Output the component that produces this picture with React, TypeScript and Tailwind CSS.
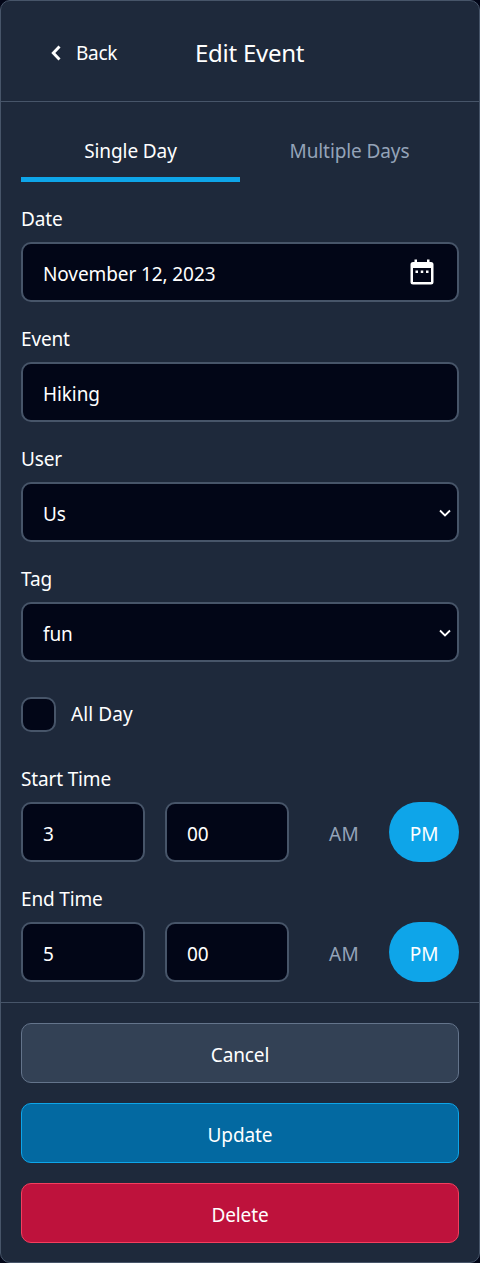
import type { ReactNode } from "react";

const inputBox =
  "flex h-[60px] items-center rounded-[10px] border-2 border-[#475569] bg-[#020617] px-5 pt-[3px]";

function Field({ label, children }: { label: string; children: ReactNode }) {
  return (
    <div className="flex flex-col gap-2.5">
      <label className="h-[30px] pt-0.5 leading-[30px] tracking-[-0.15px]">{label}</label>
      {children}
    </div>
  );
}

function Chevron() {
  return (
    <svg className="-mt-px h-3 w-3" viewBox="0 0 12 12" fill="none" stroke="white" strokeWidth="1.8">
      <path d="M1 3.500 6 8.500 11 3.500" />
    </svg>
  );
}

function Select({ value }: { value: string }) {
  return (
    <div className="flex h-[60px] items-center justify-between rounded-[10px] border-2 border-[#475569] bg-[#020617] pt-[3px] pr-[6px] pl-5">
      <span>{value}</span>
      <Chevron />
    </div>
  );
}

function TimeRow({ label, hour, minute }: { label: string; hour: string; minute: string }) {
  return (
    <Field label={label}>
      <div className="flex">
        <div className={`${inputBox} w-[124px]`}>{hour}</div>
        <div className={`${inputBox} ml-5 w-[124px]`}>{minute}</div>
        <button className="ml-5 h-[60px] w-[70px] pt-[3px] tracking-[0.4px] text-[#94a3b8]">AM</button>
        <button className="ml-2.5 h-[60px] w-[70px] rounded-[30px] bg-[#0ea5e9] pt-[3px]">PM</button>
      </div>
    </Field>
  );
}

export default function App() {
  return (
    <div className="min-h-[1263px] w-[480px] bg-[#020617] font-['Noto_Sans',sans-serif] text-[19px] leading-[28px] tracking-[-0.1px] text-white">
      <div className="flex h-[1263px] flex-col rounded-[10px] border border-[#475569] bg-[#1e293b]">
        <header className="flex h-[101px] shrink-0 items-center border-b border-[#475569] pt-1">
          <button className="ml-[49px] flex w-[145px] items-center">
            <svg className="h-4 w-3" viewBox="0 0 12 16" fill="none" stroke="white" strokeWidth="2.9">
              <path d="M9.500 1.500 3.300 8 9.500 14.500" />
            </svg>
            <span className="ml-3.5 tracking-[-0.3px]">Back</span>
          </button>
          <h1 className="text-[24px] tracking-[-0.25px]">Edit Event</h1>
        </header>

        <main className="flex h-[901px] shrink-0 flex-col gap-5 border-b border-[#475569] px-5 pt-5">
          <div className="grid h-[60px] grid-cols-2">
            <button className="border-b-[5px] border-[#0ea5e9] pt-[3px]">Single Day</button>
            <button className="border-b-[5px] border-transparent pt-[3px] text-[#94a3b8]">
              Multiple Days
            </button>
          </div>
          <Field label="Date">
            <div className={`${inputBox} justify-between`}>
              <span>November 12, 2023</span>
              <svg className="-mt-[3px] mr-[3px] h-[26px] w-6" viewBox="0 0 24 26">
                <path
                  fill="white"
                  fillRule="evenodd"
                  d="M4.500 .5H7v2.500h10V.5h2.500v2.500h1.500a2.500 2.500 0 0 1 2.500 2.500v17.500a2.500 2.500 0 0 1-2.500 2.500H3A2.500 2.500 0 0 1 .5 23v-17.500A2.500 2.500 0 0 1 3 3h1.500zM3 9v14h18V9z"
                />
                <path fill="white" d="M5.500 11.500H8V14H5.500zM10.750 11.500h2.500V14h-2.500zM16 11.500h2.500V14H16z" />
              </svg>
            </div>
          </Field>
          <Field label="Event">
            <div className={inputBox}>Hiking</div>
          </Field>
          <Field label="User">
            <Select value="Us" />
          </Field>
          <Field label="Tag">
            <Select value="fun" />
          </Field>
          <label className="flex h-[60px] items-center gap-[15px] pt-[5px]">
            <span className="h-[35px] w-[35px] rounded-[10px] border-2 border-[#475569] bg-[#020617]" />
            <span className="pb-0.5 tracking-[0.1px]">All Day</span>
          </label>
          <TimeRow label="Start Time" hour="3" minute="00" />
          <TimeRow label="End Time" hour="5" minute="00" />
        </main>

        <footer className="flex flex-col gap-5 px-5 pt-5">
          <button className="h-[60px] shrink-0 rounded-[10px] border border-[#64748b] bg-[#334155] pt-[3px]">Cancel</button>
          <button className="h-[60px] shrink-0 rounded-[10px] border border-[#0ea5e9] bg-[#0369a1] pt-[3px]">Update</button>
          <button className="h-[60px] shrink-0 rounded-[10px] border border-[#f43f5e] bg-[#be123c] pt-[3px]">Delete</button>
        </footer>
      </div>
    </div>
  );
}
